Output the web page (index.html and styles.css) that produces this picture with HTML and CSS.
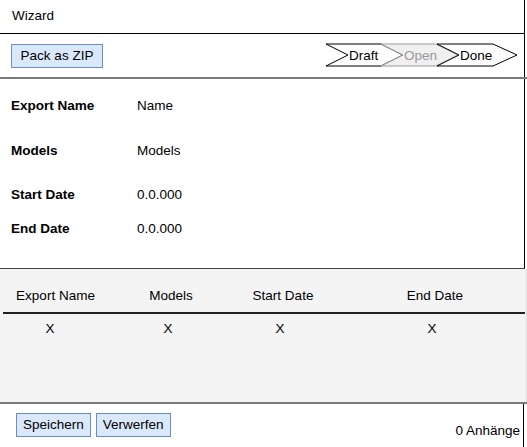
FILE: index.html
```html
<!DOCTYPE html>
<html>
<head>
<meta charset="utf-8">
<link rel="stylesheet" href="styles.css">
</head>
<body>
<div class="app">
  <div class="top">
    <div class="title">Wizard</div>
    <div class="toolbar">
      <button class="btn zip">Pack as ZIP</button>
      <svg class="stepper" width="194" height="24" viewBox="0 0 194 24">
        <polygon points="1,1 56,1 78,12 56,23 1,23 23,12" fill="#fff" stroke="#000" stroke-width="1"/>
        <polygon points="56,1 111,1 133,12 111,23 56,23 78,12" fill="#f0f0f0" stroke="#999" stroke-width="1"/>
        <polygon points="112,1 168,1 192,12 168,23 112,23 134,12" fill="#fff" stroke="#000" stroke-width="1"/>
        <text x="24" y="16.5" class="st">Draft</text>
        <text x="79" y="16.5" class="st muted">Open</text>
        <text x="135" y="16.5" class="st">Done</text>
      </svg>
    </div>
  </div>
  <div class="sep"></div>
  <div class="form">
    <div class="lbl">Export Name</div><div class="val">Name</div>
    <div class="lbl">Models</div><div class="val">Models</div>
    <div class="lbl">Start Date</div><div class="val">0.0.000</div>
    <div class="lbl">End Date</div><div class="val">0.0.000</div>
  </div>
  <div class="table">
    <div class="thead">
      <div class="cell">Export Name</div>
      <div class="cell">Models</div>
      <div class="cell">Start Date</div>
      <div class="cell">End Date</div>
    </div>
    <div class="trow">
      <div class="cell first">X</div>
      <div class="cell">X</div>
      <div class="cell">X</div>
      <div class="cell">X</div>
    </div>
  </div>
  <div class="sep"></div>
  <div class="footer">
    <div class="actions">
      <button class="btn">Speichern</button>
      <button class="btn">Verwerfen</button>
    </div>
    <div class="count">0 Anhänge</div>
  </div>
</div>
</body>
</html>
```
FILE: styles.css
```css
html, body {
  margin: 0;
  padding: 0;
  background: #fff;
}
.app {
  width: 527px;
  height: 447px;
  display: flex;
  flex-direction: column;
  font-family: "Liberation Sans", Arial, sans-serif;
  font-size: 13.5px;
  color: #000;
  overflow: hidden;
}
.top {
  width: 524px;
  border-right: 1px solid #000;
}
.title {
  height: 33px;
  line-height: 32px;
  padding-left: 12px;
  border-bottom: 1px solid #000;
}
.toolbar {
  height: 43px;
  display: flex;
  align-items: center;
  justify-content: space-between;
  padding: 0 5px 0 11px;
}
.btn {
  font-family: inherit;
  font-size: 13.5px;
  color: #000;
  background: #dae8fc;
  border: 1px solid #6c8ebf;
  height: 24px;
  padding: 0 6px;
  margin: 0;
  line-height: 22px;
  cursor: pointer;
}
.zip {
  width: 92px;
}
.stepper {
  display: block;
  margin-bottom: 1px;
}
.st {
  font-family: "Liberation Sans", Arial, sans-serif;
  font-size: 13.5px;
  fill: #000;
}
.st.muted {
  fill: #999;
}
.sep {
  height: 2px;
  background: #7a7a7a;
}
.form {
  height: 170px;
  border-right: 1px solid #000;
  border-bottom: 1px solid #444;
  padding-top: 19px;
  padding-left: 11px;
  width: 513px;
  display: grid;
  grid-template-columns: 126px 1fr;
  grid-template-rows: 45px 44px 34px 16px;
  line-height: 16px;
}
.lbl {
  font-weight: bold;
}
.table {
  height: 133px;
  background: #f4f4f4;
  border-right: 1px solid #e0e0e0;
  width: 526px;
  overflow: hidden;
}
.thead, .trow {
  display: grid;
  grid-template-columns: 108px 120px 104px 200px;
  line-height: 16px;
}
.thead {
  padding-top: 19px;
  height: 24px;
  border-bottom: 2px solid #222;
  margin-left: 3px;
  margin-right: 1px;
}
.thead .cell:first-child {
  margin-left: -3px;
}
.cell {
  text-align: center;
}
.trow {
  padding-top: 7px;
}
.trow .first {
  padding-right: 8px;
}
.footer {
  flex: 1;
  width: 524px;
  border-right: 1px solid #000;
  display: flex;
  justify-content: space-between;
  align-items: flex-start;
  padding: 9px 3px 0 16px;
  box-sizing: border-box;
}
.actions {
  display: flex;
  gap: 5px;
}
.count {
  margin-top: 10px;
  line-height: 16px;
}
```
